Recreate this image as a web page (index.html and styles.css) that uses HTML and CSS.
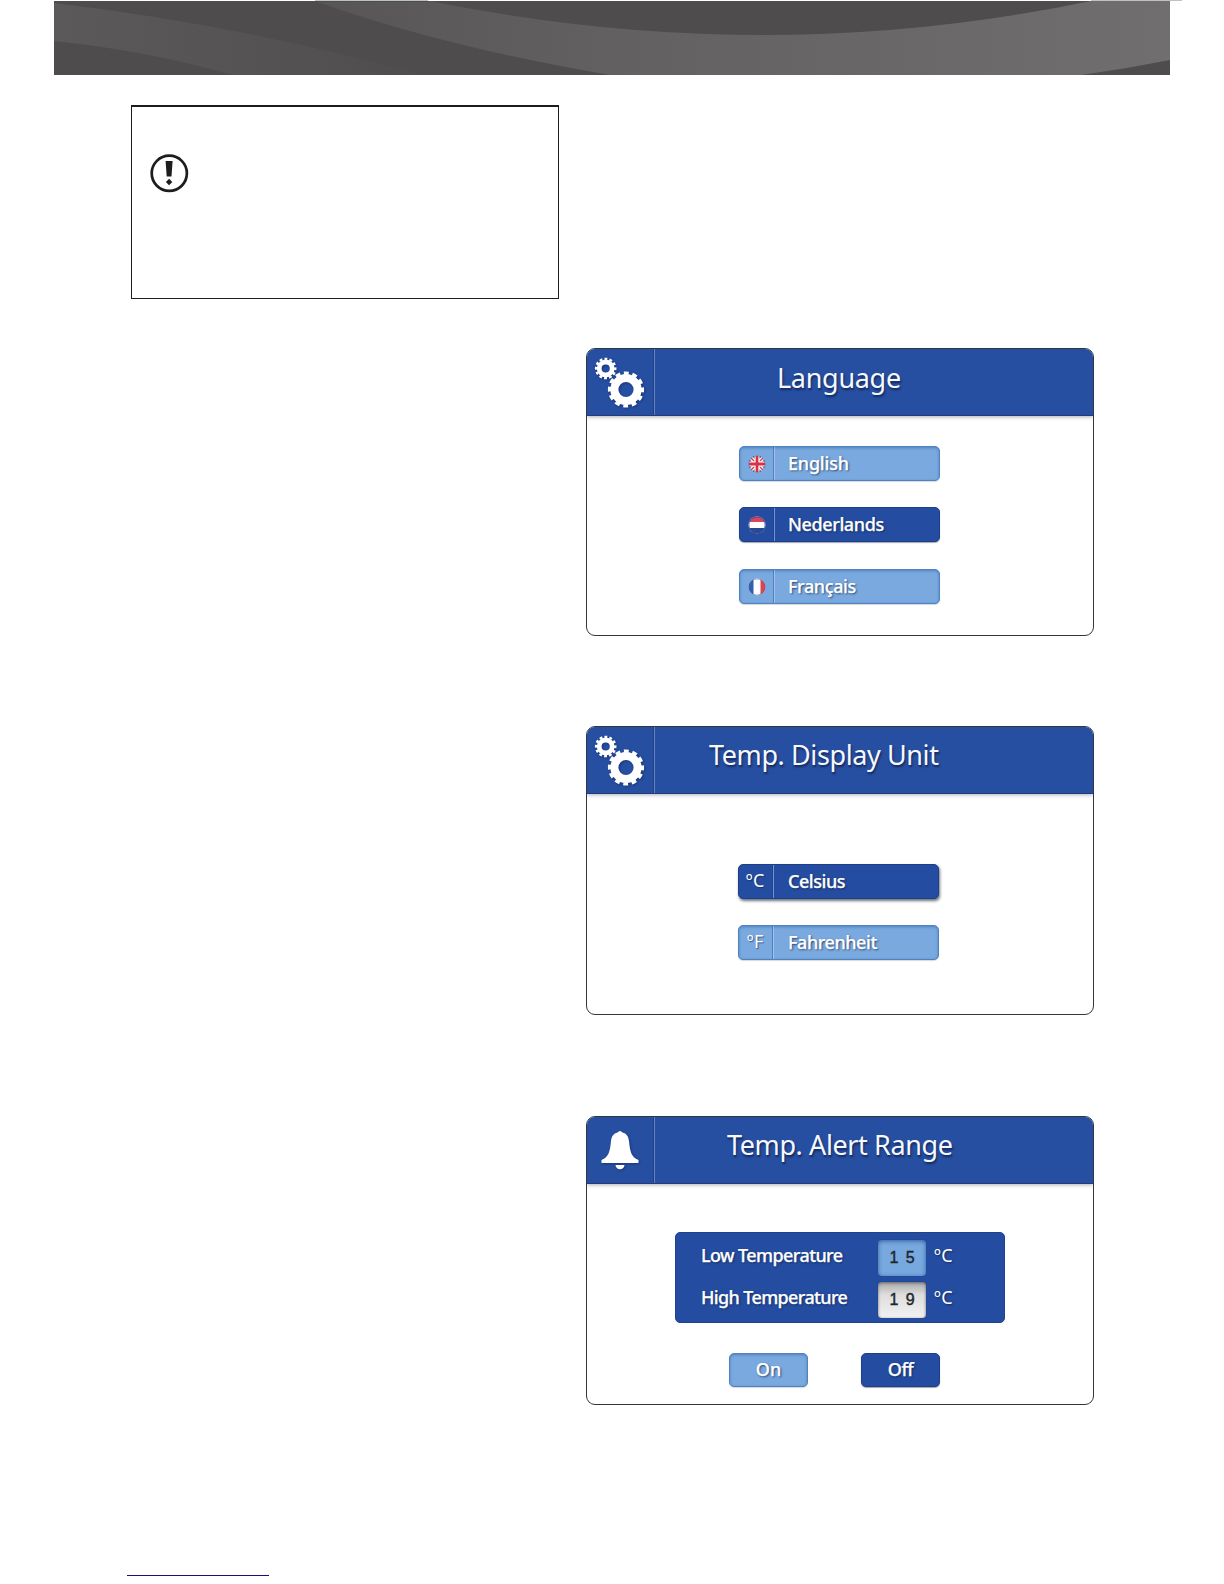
FILE: index.html
```html
<!DOCTYPE html>
<html lang="en">
<head>
<meta charset="utf-8">
<title>Settings</title>
<link rel="stylesheet" href="styles.css">
</head>
<body>
<svg width="0" height="0" class="defs">
  <symbol id="gears" viewBox="0 0 68 67">
    <g fill="none" stroke="#fff">
      <circle cx="18.7" cy="19.5" r="6.500" stroke-width="4.800"/>
      <circle cx="18.7" cy="19.5" r="9.6" stroke-width="2.4" pathLength="24" stroke-dasharray="1.15 .85" stroke-dashoffset=".5"/>
      <circle cx="39" cy="40.5" r="11.6" stroke-width="8"/>
      <circle cx="39" cy="40.5" r="16.5" stroke-width="3.2" pathLength="24" stroke-dasharray="1.15 .85" stroke-dashoffset=".5"/>
    </g>
  </symbol>
</svg>
<header class="banner">
  <svg viewBox="54 0 1116 75" width="1116" height="75">
    <defs>
      <linearGradient id="swoosh" gradientUnits="userSpaceOnUse" x1="315" y1="0" x2="1170" y2="0">
        <stop offset="0" stop-color="#575556"/><stop offset=".35" stop-color="#626061"/><stop offset="1" stop-color="#706e6f"/>
      </linearGradient>
      <linearGradient id="fade" gradientUnits="userSpaceOnUse" x1="54" y1="0" x2="423" y2="0">
        <stop offset="0" stop-color="#5b595a"/><stop offset="1" stop-color="#4f4d4e"/>
      </linearGradient>
    </defs>
    <rect x="54" y="1" width="1116" height="74" fill="#4e4c4d"/>
    <path d="M54 3Q240 25 423 75H232Q150 51 54 41Z" fill="url(#fade)"/>
    <path d="M315 1Q440 46 610 75H1081Q1125 69 1170 60V1H1091Q766 69 430 1Z" fill="url(#swoosh)"/>
    <path d="M54 1.5H430M620 1.5H1088" stroke="#4a4f4c"/>
    <path d="M315 .5H428M1091 .5H1182" stroke="#bfc1bf"/>
  </svg>
</header>
<main class="page">
  <section class="side">
    <aside class="notice">
      <svg viewBox="0 0 40 40" width="40" height="40">
        <circle cx="20.3" cy="20.3" r="17.6" fill="none" stroke="#1d1d1f" stroke-width="2.7"/>
        <path d="M16.600 8H23.600L22.500 23.500H17.700ZM20.100 25.800L23.300 29L20.100 32.200L16.900 29Z" fill="#1d1d1f"/>
      </svg>
    </aside>
    <div class="link"></div>
  </section>
  <section class="screens">
    <article class="card languages">
      <div class="head"><div class="icon"><svg width="68" height="67"><use href="#gears"/></svg></div><h2 class="language">Language</h2></div>
      <div class="options">
        <div class="option light"><span class="badge"><svg viewBox="0 0 18 18" width="18" height="18">
          <clipPath id="disc"><circle cx="9" cy="9" r="8.5"/></clipPath>
          <g clip-path="url(#disc)"><rect width="18" height="18" fill="#3c5da6"/><path d="M0 0L18 18M18 0L0 18" stroke="#fff" stroke-width="4"/><path d="M0 0L18 18M18 0L0 18" stroke="#d63f4f" stroke-width="1.5"/><path d="M9 0V18M0 9H18" stroke="#fff" stroke-width="5"/><path d="M9 0V18M0 9H18" stroke="#d93143" stroke-width="2.8"/></g><circle cx="9" cy="9" r="8" fill="none" stroke="#4867a4" stroke-opacity=".4"/></svg></span><span class="label english">English</span></div>
        <div class="option dark"><span class="badge"><svg viewBox="0 0 18 18" width="18" height="18">
          <g clip-path="url(#disc)"><rect width="18" height="18" fill="#fff"/><rect width="18" height="6" fill="#d64661"/><rect y="12" width="18" height="6" fill="#284993"/></g><circle cx="9" cy="9" r="8" fill="none" stroke="#344583" stroke-opacity=".6"/></svg></span><span class="label nederlands">Nederlands</span></div>
        <div class="option light"><span class="badge"><svg viewBox="0 0 18 18" width="18" height="18">
          <g clip-path="url(#disc)"><rect width="18" height="18" fill="#fff"/><rect width="5.5" height="18" fill="#355da8"/><rect x="12.5" width="6" height="18" fill="#df4350"/></g><circle cx="9" cy="9" r="8" fill="none" stroke="#4867a4" stroke-opacity=".5"/></svg></span><span class="label francais">Français</span></div>
      </div>
    </article>
    <article class="card units">
      <div class="head"><div class="icon"><svg width="68" height="67"><use href="#gears"/></svg></div><h2 class="display-unit">Temp. Display Unit</h2></div>
      <div class="options">
        <div class="option dark raised"><span class="badge"><i>º</i>C</span><span class="label celsius">Celsius</span></div>
        <div class="option light"><span class="badge"><i>º</i>F</span><span class="label fahrenheit">Fahrenheit</span></div>
      </div>
    </article>
    <article class="card alert">
      <div class="head"><div class="icon"><svg viewBox="0 0 68 67" width="68" height="67">
        <path d="M30.500 15.500Q33 12.500 35.500 15.500C39.500 16.500 41.500 19.500 42 24C43 34 44 40 51.500 43V46H14.500V43C22 40 23 34 24 24C24.500 19.500 26.500 16.500 30.500 15.500ZM28.500 48H37.500Q37 52 33 52.300Q29 52 28.500 48Z" fill="#fff"/></svg></div><h2 class="alert-range">Temp. Alert Range</h2></div>
      <div class="range">
        <div class="row"><span class="name low">Low Temperature</span><span class="field blue">1 5</span><span class="unit"><i>º</i>C</span></div>
        <div class="row"><span class="name high">High Temperature</span><span class="field grey">1 9</span><span class="unit"><i>º</i>C</span></div>
      </div>
      <div class="switch"><span class="toggle light">On</span><span class="toggle dark off">Off</span></div>
    </article>
  </section>
</main>
</body>
</html>
```
FILE: styles.css
```css
* { box-sizing: border-box; }
body {
  margin: 0;
  width: 1224px;
  height: 1584px;
  overflow: hidden;
  background: #fff;
  font-family: "Noto Sans", "Open Sans", sans-serif;
}
i { font-style: normal; letter-spacing: .5px; }
.defs { display: none; }
svg { display: block; }
.banner { height: 75px; padding-left: 54px; }
.banner svg { overflow: visible; }
.page { display: flex; gap: 27px; height: 1509px; padding-left: 127px; }
.side {
  width: 432px;
  display: flex;
  flex-direction: column;
  justify-content: space-between;
  padding: 30px 0 8px;
}
.notice {
  width: 428px;
  height: 194px;
  margin-left: 4px;
  padding: 46px 0 0 17px;
  border: 1px solid #1d1d1f;
  border-top-width: 2px;
}
.link { width: 142px; height: 1px; background: #15107c; }
.screens { width: 508px; padding-top: 272.500px; }
.card {
  height: 289px;
  border: 1.500px solid #33373d;
  border-radius: 9px;
  overflow: hidden;
}
.languages { height: 288px; margin-bottom: 90.500px; }
.units { margin-bottom: 101px; }
.head {
  display: flex;
  height: 67px;
  background: #264ea1;
  border-bottom: 1px solid #243b78;
  box-shadow: 0 1px 4px rgba(20, 30, 50, .35);
}
.icon {
  width: 68px;
  border-right: 1px solid #6683bd;
  box-shadow: inset -1px 0 #203f88;
}
.icon svg { filter: drop-shadow(1px 1px 1px rgba(15, 30, 80, .5)); }
h2 {
  margin: 7px 0 0;
  color: #f5f8ff;
  font-size: 27px;
  font-weight: 400;
  line-height: 42px;
  white-space: nowrap;
  text-shadow: 1px 2px 2px rgba(10, 20, 50, .65);
}
.language { margin-top: 8px; padding-left: 122px; letter-spacing: -.3px; }
.display-unit { padding-left: 54px; letter-spacing: -.4px; }
.alert-range { padding-left: 72px; letter-spacing: -.4px; }
.options {
  display: flex;
  flex-direction: column;
  gap: 26.500px;
  padding: 30px 0 0 152px;
}
.units .options { padding: 69.500px 0 0 151px; }
.option {
  display: flex;
  width: 201px;
  height: 35px;
  border-radius: 5px;
  color: #fff;
  font-size: 18px;
  line-height: 32px;
}
.light {
  background: #79a9de;
  border: 1px solid #5081c0;
  box-shadow: inset 0 1px 3px #4f80bf, 0 1px 1px rgba(80, 100, 130, .25);
}
.dark {
  background: #244ca0;
  border: 1px solid #1f3f89;
  box-shadow: 0 1px 1px rgba(20, 30, 60, .4);
}
.raised { box-shadow: 1px 2px 3px rgba(10, 20, 40, .6); }
.badge {
  display: flex;
  justify-content: center;
  width: 35px;
  border-right: 1px solid rgba(200, 220, 255, .5);
  box-shadow: inset -1px 0 rgba(20, 50, 120, .35);
  text-shadow: 1px 1px 1px rgba(15, 35, 80, .6);
}
.units .badge { padding-right: 2px; line-height: 31px; }
.badge svg { margin-top: 8px; }
.label, .name, .toggle, .unit {
  font-weight: 500;
  white-space: nowrap;
  text-shadow: 1px 1px 2px rgba(15, 35, 80, .8);
}
.label, .name, .toggle { -webkit-text-stroke: .25px #fff; }
.label { padding-left: 13px; }
.english { letter-spacing: -.2px; }
.nederlands, .francais { letter-spacing: -.4px; }
.units .label { padding-left: 14px; letter-spacing: -.45px; }
.range {
  width: 330px;
  height: 91px;
  margin: 48px 0 0 88px;
  padding: 7px 0 0 25px;
  border-radius: 5px;
  border: 1px solid #20438f;
  background: #244ca0;
  color: #fff;
  font-size: 18px;
}
.row { display: flex; height: 42px; }
.name { width: 177px; line-height: 30px; letter-spacing: -.6px; }
.high { letter-spacing: -.64px; }
.field {
  width: 48px;
  height: 35.500px;
  border-radius: 4px;
  color: #22252b;
  font: 500 16px/36px "Liberation Sans", sans-serif;
  text-align: center;
  word-spacing: 3px;
  -webkit-text-stroke: .4px #22252b;
}
.blue { background: #77a8de; box-shadow: inset 0 1px 4px #315b9d, 0 0 1px #17346f; }
.grey {
  background: linear-gradient(#aaa, #ddd 35%, #f2f2f2);
  box-shadow: inset 0 1px 3px #666, 0 0 1px #17346f;
}
.unit { padding-left: 8px; line-height: 30px; font-weight: 400; }
.switch { display: flex; gap: 53px; padding: 30px 0 0 142px; }
.toggle {
  width: 79px;
  height: 34px;
  border-radius: 5px;
  color: #fff;
  font-size: 18px;
  line-height: 31px;
  text-align: center;
}
.off { letter-spacing: -.5px; }
```
